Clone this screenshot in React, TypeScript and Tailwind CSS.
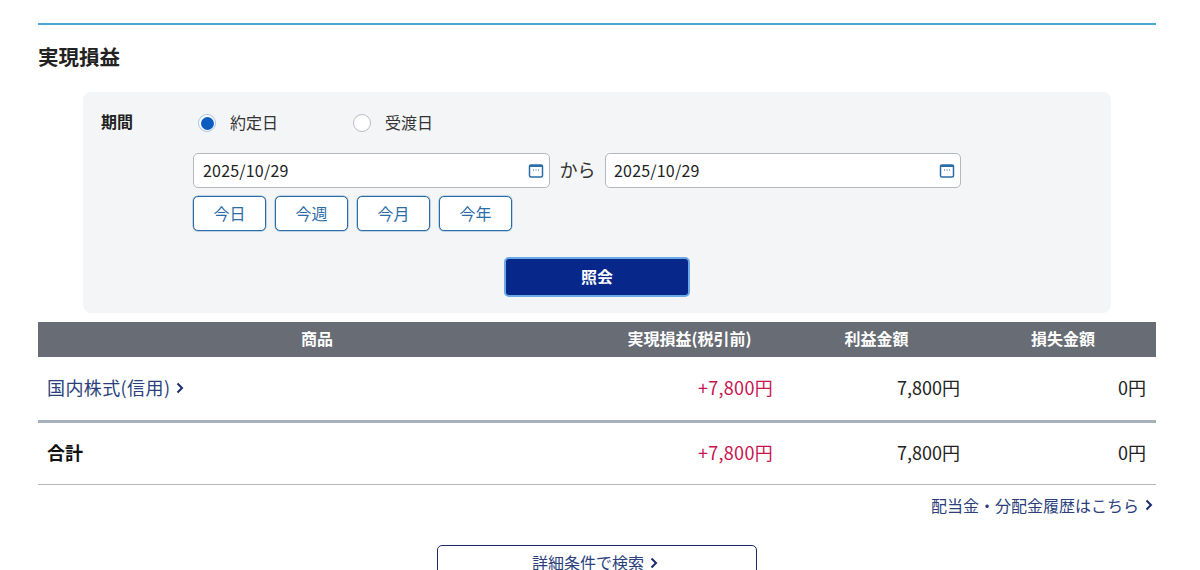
const font = { fontFamily: '"Noto Sans CJK JP", "Noto Sans", sans-serif' };

function Chevron({ className }: { className: string }) {
  return (
    <svg className={className} width="8" height="12" viewBox="0 0 8 12" fill="none">
      <path d="M1.5 1.5L6 6L1.5 10.5" stroke="currentColor" strokeWidth="2" />
    </svg>
  );
}

function Calendar() {
  return (
    <svg width="16" height="16" viewBox="0 0 16 16" fill="none">
      <rect x="1.5" y="2" width="13" height="12" rx="1.5" fill="#fff" stroke="#2a6ca8" strokeWidth="1.5" />
      <rect x="1" y="2" width="14" height="2" fill="#2a6ca8" />
      <path d="M5 7h1M7.5 7h1M10 7h1" stroke="#2a6ca8" strokeWidth="1" />
    </svg>
  );
}

function DateInput({ w, pl }: { w: string; pl: string }) {
  return (
    <div className={"flex h-[35px] items-center justify-between rounded-[5px] border border-[#b4b7bc] bg-white pr-[5px] text-[16px] tracking-[0.2px] text-[#222] " + w + " " + pl}>
      <span className="pb-[2px]">2025/10/29</span>
      <Calendar />
    </div>
  );
}

function Radio({ on, label }: { on?: boolean; label: string }) {
  return (
    <div className="flex items-center gap-[14px]">
      <span className={"flex h-[18px] w-[18px] items-center justify-center rounded-full border bg-white " + (on ? "border-[#a9c3e4]" : "border-[#b9bcc1]")}>
        {on && <span className="h-[13px] w-[13px] rounded-full bg-[#0b5cc0]" />}
      </span>
      <span className="pb-[2px] text-[16px] text-[#333]">{label}</span>
    </div>
  );
}

function Row({ label, last, bold }: { label: React.ReactNode; last?: boolean; bold?: boolean }) {
  return (
    <div className={"grid grid-cols-[558px_187px_187px_186px] items-center pb-[3px] text-[18px] " + (last ? "h-[62px] border-b border-[#b4b7bc]" : "h-[66px] border-b-[3px] border-[#a8b0ba]")}>
      <div className={"pl-[9px] " + (bold ? "font-bold text-[#111]" : "")}>{label}</div>
      <div className="pr-[10px] text-right tracking-[0.3px] text-[#c8144f]">+7,800円</div>
      <div className="pr-[10px] text-right text-[#222]">7,800円</div>
      <div className="pr-[10px] text-right text-[#222]">0円</div>
    </div>
  );
}

export default function App() {
  return (
    <div className="h-[570px] w-[1200px] overflow-hidden bg-white px-[38px] pt-[23px]" style={font}>
      <div className="w-[1118px]">
        <div className="h-[2px] bg-[#4aa8d8]" />
        <h2 className="mt-[17px] h-[32px] text-[20.5px] font-bold leading-[28px] text-[#222]">実現損益</h2>

        <div className="ml-[45px] mt-[18px] h-[221px] w-[1028px] rounded-[8px] bg-[#f4f5f7] pl-[18px] pt-[19px]">
          <div className="flex">
            <div className="w-[92px] text-[16px] font-bold leading-[20px] text-[#222]">期間</div>
            <div>
              <div className="ml-[5px] flex h-[24px] items-center gap-[75px]">
                <Radio on label="約定日" />
                <Radio label="受渡日" />
              </div>
              <div className="mt-[18px] flex items-center">
                <DateInput w="w-[357px]" pl="pl-[9px]" />
                <span className="w-[55px] pb-[2px] text-center text-[18px] text-[#333]">から</span>
                <DateInput w="w-[356px]" pl="pl-[8px]" />
              </div>
              <div className="mt-[8px] flex gap-[9px]">
                {["今日", "今週", "今月", "今年"].map((t) => (
                  <div key={t} className="flex h-[35px] w-[73px] items-center justify-center rounded-[5px] border border-[#2a6ca8] bg-white pb-[2px] text-[16px] text-[#2a6ca8] shadow-[0_0_0_0.5px_#2a6ca880]">
                    {t}
                  </div>
                ))}
              </div>
            </div>
          </div>
          <div className="ml-[403px] mt-[26px] flex h-[40px] w-[186px] items-center justify-center rounded-[5px] border-2 border-[#6aa8e8] bg-[#07288a] pb-[2px] text-[16px] font-bold text-white">
            照会
          </div>
        </div>

        <div className="mt-[9px] grid h-[35px] grid-cols-[558px_187px_187px_186px] items-center bg-[#686c74] pb-[3px] text-center text-[16px] font-bold text-white">
          <div>商品</div>
          <div>実現損益(税引前)</div>
          <div>利益金額</div>
          <div>損失金額</div>
        </div>

        <Row
          label={
            <span className="flex items-center gap-[6px] tracking-[0.4px] text-[#2a3f7c]">
              国内株式(信用)
              <Chevron className="mt-[2px] text-[#1c2c6c]" />
            </span>
          }
        />
        <Row label="合計" last bold />

        <div className="mt-[8px] flex items-center justify-end gap-[6px] pr-[3px] text-[16px] text-[#2a3f7c]">
          配当金・分配金履歴はこちら
          <Chevron className="text-[#1c2c6c]" />
        </div>

        <div className="ml-[399px] mt-[28px] flex h-[40px] w-[320px] items-start justify-center gap-[6px] rounded-[5px] border border-[#1c2c6c] pr-[4px] pt-[4px] text-[16px] leading-[24px] text-[#2a3f7c]">
          詳細条件で検索
          <Chevron className="mt-[7px] text-[#1c2c6c]" />
        </div>
      </div>
    </div>
  );
}
